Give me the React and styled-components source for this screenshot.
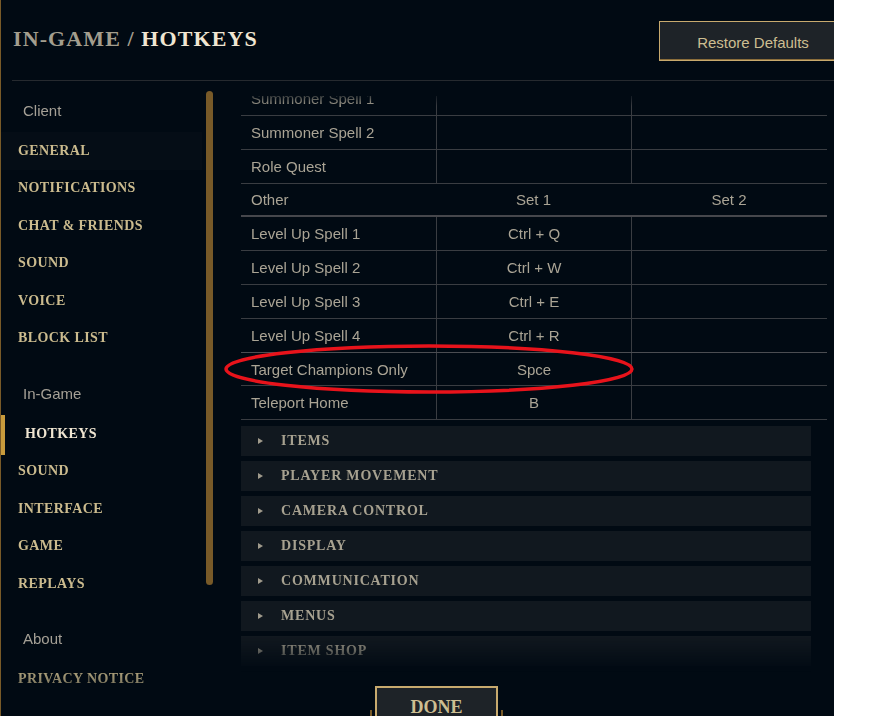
import React from 'react';
import styled, { createGlobalStyle } from 'styled-components';

const Global = createGlobalStyle`
  html, body { margin: 0; padding: 0; background: #ffffff; }
  body { font-family: "Liberation Sans", Arial, sans-serif; }
  #root { width: 885px; height: 716px; overflow: hidden; }
`;

const Panel = styled.div`
  position: relative;
  width: 834px;
  height: 716px;
  box-sizing: border-box;
  background: #010a13;
  border-left: 1px solid #785a28;
  overflow: hidden;
  display: flex;
  flex-direction: column;
`;

const Header = styled.header`
  flex: none;
  height: 81px;
  box-sizing: border-box;
  margin-left: 11px;
  padding-left: 1px;
  border-bottom: 1px solid #262a2f;
  display: flex;
  align-items: center;
  justify-content: space-between;
`;

const Title = styled.h1`
  margin: 0 0 3px 0;
  font-family: "Liberation Serif", "Times New Roman", serif;
  font-weight: 700;
  font-size: 22px;
  line-height: 22px;
  letter-spacing: 1.1px;
  color: #a39e8e;
`;

const TitleStrong = styled.span`
  color: #f0e6d2;
`;

const RestoreButton = styled.div`
  width: 188px;
  height: 40px;
  margin: 2px -13px 0 0;
  box-sizing: border-box;
  background: #1e2328;
  border: 1px solid #c8aa6e;
  box-shadow: inset 0 -1px 0 #8a6d3b;
  color: #cdbe91;
  font-family: "Liberation Sans", Arial, sans-serif;
  font-size: 15px;
  display: flex;
  align-items: center;
  justify-content: center;
  padding-top: 2px;
`;

const Body = styled.div`
  flex: 1;
  min-height: 0;
  display: flex;
`;

const NavColumn = styled.div`
  flex: none;
  display: flex;
`;

const NavList = styled.nav`
  width: 205px;
  padding-top: 10px;
  display: flex;
  flex-direction: column;
  gap: 17px;
  -webkit-mask-image: linear-gradient(to bottom, #000 582px, rgba(0,0,0,0.25) 625px);
  mask-image: linear-gradient(to bottom, #000 582px, rgba(0,0,0,0.25) 625px);
`;

const NavGroup = styled.div`
  display: flex;
  flex-direction: column;
`;

const SectionLabel = styled.div`
  height: 38px;
  margin-bottom: 3px;
  padding-left: 22px;
  display: flex;
  align-items: center;
  font-family: "Liberation Sans", Arial, sans-serif;
  font-size: 15px;
  color: #a5a096;
`;

const NavItem = styled.div`
  position: relative;
  height: 37.5px;
  margin-right: 4px;
  padding-left: ${p => (p.$selected ? '24px' : '17px')};
  display: flex;
  align-items: center;
  font-family: "Liberation Serif", "Times New Roman", serif;
  font-weight: 700;
  font-size: 14px;
  letter-spacing: 0.4px;
  color: ${p => (p.$selected ? '#f0e6d2' : '#cbbb8e')};
  background: ${p => (p.$hover ? '#050d16' : 'transparent')};

  &::before {
    content: '';
    display: ${p => (p.$selected ? 'block' : 'none')};
    position: absolute;
    left: 0;
    top: 0;
    bottom: -2px;
    width: 4px;
    background: #c89b3c;
  }
`;

const ScrollTrack = styled.div`
  width: 7px;
  padding-top: 10px;
`;

const ScrollThumb = styled.div`
  width: 7px;
  height: 494px;
  border-radius: 3.5px;
  background: #785a28;
`;

const Main = styled.main`
  margin-left: 28px;
  width: 586px;
  padding-top: 15px;
  display: flex;
  flex-direction: column;
`;

const Viewport = styled.div`
  flex: none;
  height: 576px;
  overflow: hidden;
  -webkit-mask-image: linear-gradient(to bottom, rgba(0,0,0,0.35) 0, #000 10px, #000 540px, transparent 576px);
  mask-image: linear-gradient(to bottom, rgba(0,0,0,0.35) 0, #000 10px, #000 540px, transparent 576px);
`;

const ScrollContent = styled.div`
  margin-top: -14px;
  display: flex;
  flex-direction: column;
`;

const Table = styled.div`
  display: flex;
  flex-direction: column;
`;

const Row = styled.div`
  display: grid;
  grid-template-columns: 195px 195px 1fr;
  height: ${p => (p.$head ? '33px' : '34px')};
  box-sizing: border-box;
  border-bottom: ${p => (p.$head ? '2px solid #46474c' : '1px solid #3a3d42')};
  ${p => p.$accent && 'border-top: 1px solid #4b4d52; margin-top: -1px;'}
`;

const Cell = styled.div`
  display: flex;
  align-items: center;
  justify-content: ${p => (p.$center ? 'center' : 'flex-start')};
  padding-left: ${p => (p.$center ? '0' : '10px')};
  border-left: ${p => (p.$line ? '1px solid #3a3d42' : 'none')};
  font-family: "Liberation Sans", Arial, sans-serif;
  font-size: 15px;
  color: #aaa495;
  white-space: nowrap;
`;

const Sections = styled.div`
  margin-top: 6px;
  width: 570px;
  display: flex;
  flex-direction: column;
  gap: 5px;
`;

const Section = styled.div`
  height: 30px;
  background: #11181f;
  display: flex;
  align-items: center;
  padding-left: 17px;
  gap: 18px;
`;

const Caret = styled.span`
  width: 0;
  height: 0;
  border-left: 5px solid #a09b8c;
  border-top: 3px solid transparent;
  border-bottom: 3px solid transparent;
`;

const SectionTitle = styled.span`
  font-family: "Liberation Serif", "Times New Roman", serif;
  font-weight: 700;
  font-size: 14px;
  letter-spacing: 0.8px;
  color: #a7a190;
`;

const DoneButton = styled.div`
  position: relative;
  margin: 14px 0 0 134px;
  width: 123px;
  height: 40px;
  flex: none;
  box-sizing: border-box;
  background: #1e2328;
  border: 2px solid #c8aa6e;
  padding-top: 10px;
  font-family: "Liberation Serif", "Times New Roman", serif;
  font-weight: 700;
  font-size: 18px;
  line-height: 18px;
  color: #cdbe91;
  text-align: center;

  &::before, &::after {
    content: '';
    position: absolute;
    top: 22px;
    width: 2px;
    height: 16px;
    background: #785a28;
  }
  &::before { left: -7px; }
  &::after { right: -7px; }
`;

const Annotation = styled.svg`
  position: absolute;
  left: 0;
  top: 0;
  width: 834px;
  height: 716px;
  pointer-events: none;
`;

const clientItems = ['GENERAL', 'NOTIFICATIONS', 'CHAT & FRIENDS', 'SOUND', 'VOICE', 'BLOCK LIST'];
const gameItems = ['HOTKEYS', 'SOUND', 'INTERFACE', 'GAME', 'REPLAYS'];

const topRows = ['Summoner Spell 1', 'Summoner Spell 2', 'Role Quest'];
const otherRows = [
  ['Level Up Spell 1', 'Ctrl + Q'],
  ['Level Up Spell 2', 'Ctrl + W'],
  ['Level Up Spell 3', 'Ctrl + E'],
  ['Level Up Spell 4', 'Ctrl + R'],
  ['Target Champions Only', 'Spce'],
  ['Teleport Home', 'B'],
];
const sections = ['ITEMS', 'PLAYER MOVEMENT', 'CAMERA CONTROL', 'DISPLAY', 'COMMUNICATION', 'MENUS', 'ITEM SHOP', 'SPECTATOR'];

export default function App() {
  return (
    <>
      <Global />
      <Panel>
        <Header>
          <Title>
            IN-GAME / <TitleStrong>HOTKEYS</TitleStrong>
          </Title>
          <RestoreButton>Restore Defaults</RestoreButton>
        </Header>
        <Body>
          <NavColumn>
            <NavList>
              <NavGroup>
                <SectionLabel>Client</SectionLabel>
                {clientItems.map((t, i) => (
                  <NavItem key={t} $hover={i === 0}>{t}</NavItem>
                ))}
              </NavGroup>
              <NavGroup>
                <SectionLabel>In-Game</SectionLabel>
                {gameItems.map((t, i) => (
                  <NavItem key={t} $selected={i === 0}>{t}</NavItem>
                ))}
              </NavGroup>
              <NavGroup>
                <SectionLabel>About</SectionLabel>
                <NavItem>PRIVACY NOTICE</NavItem>
              </NavGroup>
            </NavList>
            <ScrollTrack>
              <ScrollThumb />
            </ScrollTrack>
          </NavColumn>
          <Main>
            <Viewport>
              <ScrollContent>
                <Table>
                  {topRows.map(r => (
                    <Row key={r}>
                      <Cell>{r}</Cell>
                      <Cell $center $line />
                      <Cell $center $line />
                    </Row>
                  ))}
                  <Row $head>
                    <Cell>Other</Cell>
                    <Cell $center>Set 1</Cell>
                    <Cell $center>Set 2</Cell>
                  </Row>
                  {otherRows.map(([a, b]) => (
                    <Row key={a} $accent={a === 'Target Champions Only'}>
                      <Cell>{a}</Cell>
                      <Cell $center $line>{b}</Cell>
                      <Cell $center $line />
                    </Row>
                  ))}
                </Table>
                <Sections>
                  {sections.map(s => (
                    <Section key={s}>
                      <Caret />
                      <SectionTitle>{s}</SectionTitle>
                    </Section>
                  ))}
                </Sections>
              </ScrollContent>
            </Viewport>
            <DoneButton>DONE</DoneButton>
          </Main>
        </Body>
        <Annotation viewBox="0 0 834 716">
          <ellipse cx="428" cy="369" rx="203" ry="23" fill="none" stroke="#e8131b" strokeWidth="3.5" />
        </Annotation>
      </Panel>
    </>
  );
}
